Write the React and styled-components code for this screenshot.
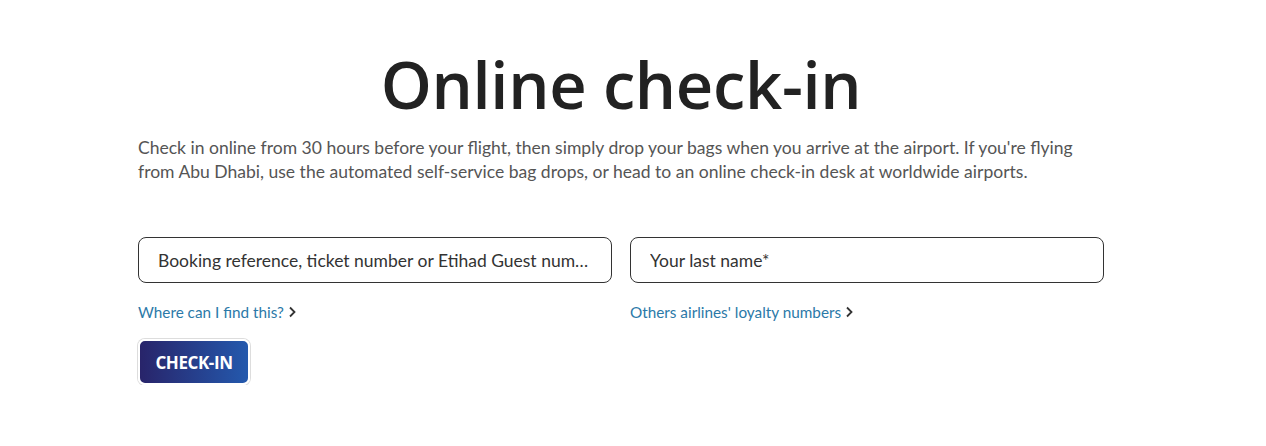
import React from 'react';
import styled, {createGlobalStyle} from 'styled-components';

const GlobalStyle = createGlobalStyle`
  body {
    margin: 0;
    background: #fff;
    font-family: "Lato", "Open Sans", sans-serif;
  }
`;

const Page = styled.main`
  width: 966px;
  margin: 0 0 0 138px;
  padding-top: 41px;
`;

const Title = styled.h1`
  margin: 0;
  text-align: center;
  font-family: "Open Sans", sans-serif;
  font-weight: 600;
  font-size: 65px;
  line-height: 86px;
  color: #222;
  letter-spacing: -0.3px;
`;

const Intro = styled.p`
  margin: 9px 0 0 0;
  font-size: 17.55px;
  line-height: 24px;
  color: #555;
  font-weight: 400;
`;

const Form = styled.form`
  margin-top: 53px;
  display: grid;
  grid-template-columns: 1fr 1fr;
  column-gap: 18px;
`;

const Field = styled.div`
  display: flex;
  flex-direction: column;
  align-items: flex-start;
`;

const Input = styled.input`
  box-sizing: border-box;
  height: 46px;
  width: 100%;
  border: 1px solid #333;
  border-radius: 8px;
  padding: 0 19px;
  font-family: "Lato", sans-serif;
  font-size: 17.5px;
  color: #333;
  outline: none;
  text-overflow: ellipsis;

  &::placeholder {
    color: #333;
    opacity: 1;
  }
`;

const HelpLink = styled.a`
  margin-top: 19px;
  display: inline-flex;
  align-items: center;
  gap: 4px;
  font-size: 15.3px;
  line-height: 20px;
  color: #2b79a8;
  text-decoration: none;
  cursor: pointer;
`;

const Chevron = () => (
  <svg width="9" height="12" viewBox="0 0 9 12" fill="none">
    <path d="M2 1.5 L6.5 6 L2 10.5" stroke="#333" strokeWidth="1.8" />
  </svg>
);

const Button = styled.button`
  margin-top: 17px;
  width: 112px;
  height: 46px;
  border: 2px solid #fff;
  border-radius: 7px;
  box-shadow: 0 0 0 1px #ddd;
  background: linear-gradient(to right, #28246a, #2459ad);
  color: #fff;
  font-family: "Open Sans", sans-serif;
  font-weight: 700;
  font-size: 17px;
  letter-spacing: -0.4px;
  cursor: pointer;
`;

export default function App() {
  return (
    <>
      <GlobalStyle />
      <Page>
        <Title>Online check-in</Title>
        <Intro>
          Check in online from 30 hours before your flight, then simply drop your bags when you arrive at the airport. If you're flying from Abu Dhabi, use the automated self-service bag drops, or head to an online check-in desk at worldwide airports.
        </Intro>
        <Form onSubmit={e => e.preventDefault()}>
          <Field>
            <Input placeholder="Booking reference, ticket number or Etihad Guest number*" />
            <HelpLink>Where can I find this? <Chevron /></HelpLink>
          </Field>
          <Field>
            <Input placeholder="Your last name*" />
            <HelpLink>Others airlines' loyalty numbers <Chevron /></HelpLink>
          </Field>
        </Form>
        <Button>CHECK-IN</Button>
      </Page>
    </>
  );
}
